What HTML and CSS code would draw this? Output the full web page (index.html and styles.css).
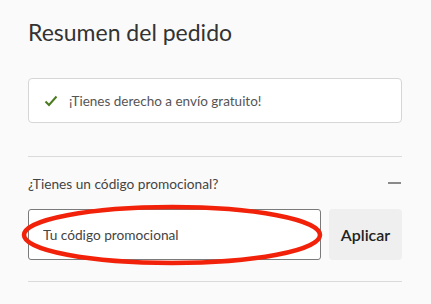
FILE: index.html
```html
<!DOCTYPE html>
<html lang="es">
<head>
    <meta charset="UTF-8">
    <meta name="viewport" content="width=device-width, initial-scale=1.0">
    <title>Resumen del pedido</title>
    <link rel="stylesheet" href="styles.css">
</head>
<body>
    <div class="summary">
        <h1>Resumen del pedido</h1>

        <!-- Aviso de envío -->
        <div class="notice">
            <svg class="check" width="14" height="12" viewBox="0 0 14 12">
                <path d="M1.5 6.5 L5 10 L12.5 1.5" fill="none" stroke="#4b7b1f" stroke-width="2"/>
            </svg>
            <span>¡Tienes derecho a envío gratuito!</span>
        </div>

        <!-- Código promocional -->
        <div class="promo">
            <div class="promo-head">
                <span>¿Tienes un código promocional?</span>
                <span class="minus"></span>
            </div>
            <div class="promo-form">
                <input type="text" placeholder="Tu código promocional">
                <button>Aplicar</button>
                <svg class="mark" width="304" height="64" viewBox="0 0 304 64">
                    <ellipse cx="152" cy="32" rx="148" ry="28" fill="none" stroke="#f2220a" stroke-width="4.5"/>
                </svg>
            </div>
        </div>
    </div>
</body>
</html>
```

FILE: styles.css
```css
body {
    margin: 0;
    background-color: #fafafa;
    font-family: Lato, "Open Sans", sans-serif;
    color: #333;
}

.summary {
    padding: 0 29px 0 28px;
}

h1 {
    margin: 0;
    padding-top: 18px;
    height: 60px;
    font-size: 23px;
    font-weight: 400;
    color: #333;
}

/* Aviso */
.notice {
    display: flex;
    align-items: center;
    gap: 11px;
    height: 43px;
    padding: 0 15px;
    background-color: white;
    border: 1px solid #d6d6d6;
    border-radius: 4px;
    font-size: 13.5px;
    color: #555;
}

/* Promo */
.promo {
    margin-top: 33px;
    border-top: 1px solid #dadada;
    border-bottom: 1px solid #dadada;
    padding-bottom: 21px;
}

.promo-head {
    display: flex;
    justify-content: space-between;
    align-items: center;
    height: 52px;
    font-size: 13.7px;
    color: #444;
}

.minus {
    width: 13px;
    height: 2px;
    background-color: #8a8a8a;
    margin-right: 1px;
}

.promo-form {
    position: relative;
    display: flex;
    gap: 8px;
}

.promo-form input {
    flex: 1;
    height: 51px;
    box-sizing: border-box;
    padding: 0 14px;
    border: 1px solid #7a7a7a;
    border-radius: 3px;
    background-color: white;
    font-family: inherit;
    font-size: 13.7px;
}

.promo-form input::placeholder {
    color: #444;
}

.promo-form button {
    width: 73px;
    height: 51px;
    border: none;
    border-radius: 4px;
    background-color: #efefef;
    font-family: inherit;
    font-size: 16px;
    font-weight: 600;
    color: #222;
}

.mark {
    position: absolute;
    left: -8px;
    top: -6px;
    pointer-events: none;
}
```
